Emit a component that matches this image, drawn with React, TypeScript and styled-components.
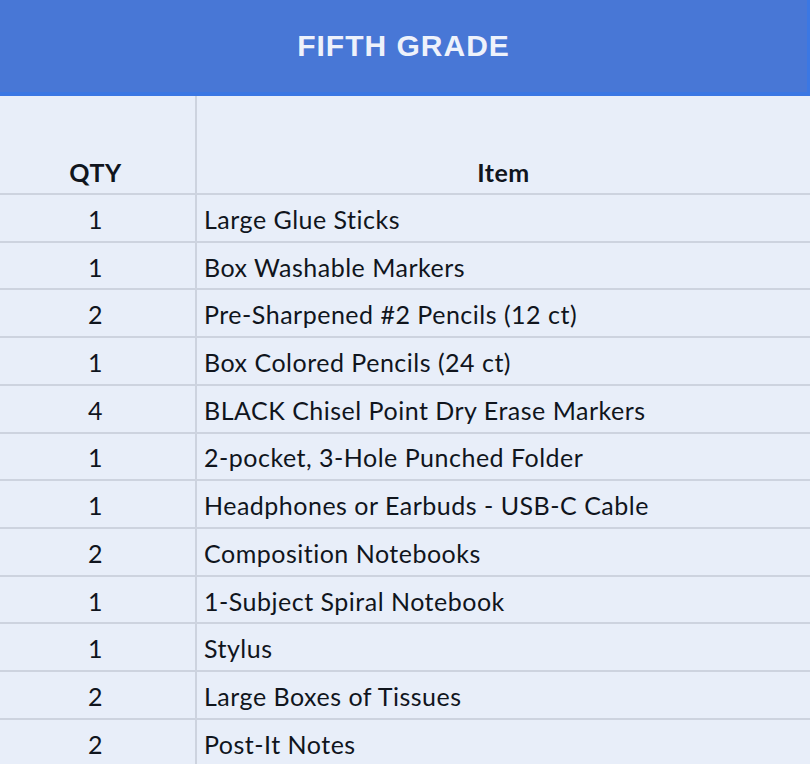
import React from "react";
import styled, { createGlobalStyle } from "styled-components";

const GlobalStyle = createGlobalStyle`
  html, body { margin: 0; padding: 0; background: #e8eef9; }
  body { width: 810px; height: 764px; overflow: hidden; }
`;

const Sheet = styled.div`
  width: 810px;
  height: 764px;
  background: #e8eef9;
  display: flex;
  flex-direction: column;
  overflow: hidden;
`;

const TitleBar = styled.div`
  height: 92px;
  flex: none;
  background: #4877d6;
  border-bottom: 4px solid #3b77e3;
  border-right: 3px solid #3b77e3;
  display: flex;
  align-items: center;
  justify-content: center;
`;

const Title = styled.h1`
  margin: 0;
  font-family: "Liberation Sans", Arial, sans-serif;
  font-weight: 700;
  font-size: 30px;
  letter-spacing: 1px;
  color: #eef2fb;
`;

const Table = styled.div`
  display: grid;
  grid-template-columns: 197px 1fr;
`;

const Cell = styled.div<{ $head?: boolean; $center?: boolean }>`
  height: ${(p) => (p.$head ? "99px" : "47.73px")};
  border-bottom: 2px solid #cdd3df;
  display: flex;
  align-items: ${(p) => (p.$head ? "flex-end" : "center")};
  justify-content: ${(p) => (p.$center ? "center" : "flex-start")};
  padding: ${(p) => (p.$head ? "0 0 6px" : "2px 0 0")};
  box-sizing: border-box;
  font-family: "Lato", "Open Sans", sans-serif;
  font-size: 25px;
  letter-spacing: 0.5px;
  font-weight: ${(p) => (p.$head ? 700 : 400)};
  color: #10151d;
  white-space: nowrap;
`;

const QtyCell = styled(Cell)`
  border-right: 2px solid #cdd3df;
  padding-right: 4px;
`;

const ItemCell = styled(Cell)`
  padding-left: ${(p) => (p.$center ? "0" : "7px")};
`;

const rows: [string, string][] = [
  ["1", "Large Glue Sticks"],
  ["1", "Box Washable Markers"],
  ["2", "Pre-Sharpened #2 Pencils (12 ct)"],
  ["1", "Box Colored Pencils (24 ct)"],
  ["4", "BLACK Chisel Point Dry Erase Markers"],
  ["1", "2-pocket, 3-Hole Punched Folder"],
  ["1", "Headphones or Earbuds - USB-C Cable"],
  ["2", "Composition Notebooks"],
  ["1", "1-Subject Spiral Notebook"],
  ["1", "Stylus"],
  ["2", "Large Boxes of Tissues"],
  ["2", "Post-It Notes"],
];

export default function App() {
  return (
    <>
      <GlobalStyle />
      <Sheet>
        <TitleBar>
          <Title>FIFTH GRADE</Title>
        </TitleBar>
        <Table>
          <QtyCell $head $center>QTY</QtyCell>
          <ItemCell $head $center>Item</ItemCell>
          {rows.map(([q, item], i) => (
            <React.Fragment key={i}>
              <QtyCell $center>{q}</QtyCell>
              <ItemCell>{item}</ItemCell>
            </React.Fragment>
          ))}
        </Table>
      </Sheet>
    </>
  );
}
